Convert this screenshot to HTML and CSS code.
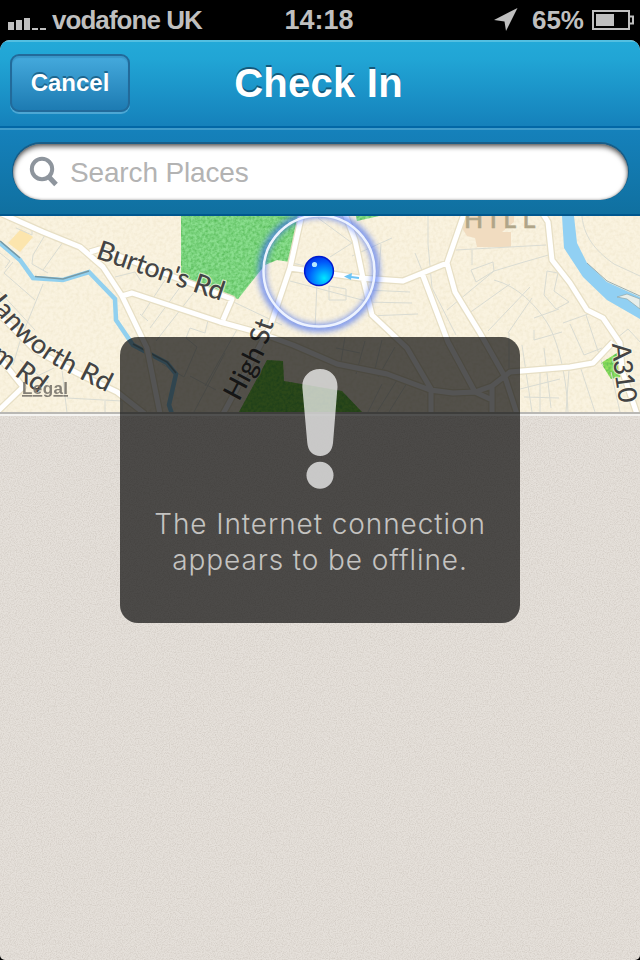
FILE: index.html
```html
<!DOCTYPE html>
<html lang="en">
<head>
<meta charset="utf-8">
<title>Check In</title>
<link rel="stylesheet" href="styles.css">
</head>
<body>
<div class="phone">
  <div class="status">
    <div class="carrier">
      <svg width="39" height="14" viewBox="0 0 39 14" fill="#bfbfbf"><path d="M0 6h6v8H0zM8 4h6v10H8zM16 2h6v12h-6zM24 12h6v2h-6zM32 12h6v2h-6z"/></svg>
      <span class="carrier-name">vodafone UK</span>
    </div>
    <div class="clock">14:18</div>
    <div class="power">
      <svg class="arrow" width="24" height="24" viewBox="0 0 24 24" fill="#bfbfbf"><path d="M23.500 0L0 12L10.500 13.500L12 23z"/></svg>
      <span class="percent">65%</span>
      <svg width="42" height="20" viewBox="0 0 42 20"><path d="M1 1h36v18H1zM38 6.500h3v7h-3" fill="none" stroke="#bfbfbf" stroke-width="2"/><path d="M4 4h18v12H4z" fill="#bfbfbf"/></svg>
    </div>
  </div>
  <div class="screen">
    <div class="navbar">
      <div class="cancel"><span>Cancel</span></div>
      <div class="title"><span>Check In</span></div>
      <div class="spacer"></div>
    </div>
    <div class="searchbar">
      <div class="field">
        <svg width="30" height="32" viewBox="0 0 30 32" fill="none" stroke="#8e959d"><circle cx="13" cy="13" r="10.200" stroke-width="4"/><path d="M19.500 20.500L27 28.500" stroke-width="5"/></svg>
        <span>Search Places</span>
      </div>
    </div>
    <svg class="map" width="640" height="196" viewBox="0 216 640 196">
      <defs>
        <filter id="grain" x="0" y="0" width="100%" height="100%" color-interpolation-filters="sRGB"><feTurbulence type="fractalNoise" baseFrequency=".35" numOctaves="2" result="n"/><feColorMatrix in="n" type="matrix" values="0 0 0 0 .3  0 0 0 0 .7  0 0 0 0 .3  1.400 0 0 0 -.45"/><feComposite in2="SourceGraphic" operator="in"/><feMerge><feMergeNode in="SourceGraphic"/><feMergeNode/></feMerge></filter>
        <filter id="paper" x="0" y="0" width="100%" height="100%" color-interpolation-filters="sRGB"><feTurbulence type="fractalNoise" baseFrequency=".3" numOctaves="2"/><feColorMatrix type="matrix" values="0 0 0 0 .7  0 0 0 0 .62  0 0 0 0 .35  .4 0 0 0 -.15"/></filter>
        <filter id="glow" x="-30%" y="-30%" width="160%" height="160%"><feGaussianBlur stdDeviation="3"/></filter>
        <radialGradient id="ball" cx=".68" cy=".75" r=".75"><stop offset="0" stop-color="#00e8ff"/><stop offset=".4" stop-color="#0097ff"/><stop offset=".75" stop-color="#0057fa"/><stop offset="1" stop-color="#0038e8"/></radialGradient>
        <path id="burton" d="M95 258L224 302"/>
        <path id="hanworth" d="M-19 294L3 321C20 342 40 359 72 375L122 400"/>
        <path id="lower" d="M-10 358L55 405"/>
        <path id="high" d="M239 402C248 385 256 370 262 358S268 338 277 315"/>
        <path id="a310" d="M612 344C613 362 616 385 621 412"/>
      </defs>
      <path d="M0 216h640v196H0z" fill="#faf3e0"/>
      <path d="M0 216h640v196H0z" filter="url(#paper)" opacity=".5"/>
      <path d="M21 229l12 8-13 15-12-9z" fill="#fce5ad"/>
      <path d="M465 216h49v6l-12 10 9 0v15h-34l-2-9-8-2-5-8z" fill="#f1dcc0"/>
      <g filter="url(#grain)">
        <path d="M181 216h120l-11 46-13-2-12 5-12 15-15 19-57-21z" fill="#8ade8e"/>
        <path d="M356 216h23l-22 5z" fill="#8ade8e"/>
        <path d="M267 360l16 1 1 20 58 10 20 21H239z" fill="#84da4e"/>
        <path d="M601 363l16-10 8 7v16l-14 3z" fill="#93e05d"/>
      </g>
      <g fill="none" stroke="#dadcd3" stroke-width="1">
        <path d="M16 228l16 7v-6l-10-3M45 235l-12 20-1 9 16 9M63 242l-20 28M0 253l10 8-5 7M13 262l-9 11 31 27M43 284l-22 54-8 27M0 292l35 38M20 360l28 23M29 380l25-12M60 353l7 60M67 398l55 3v12M105 401v12"/>
        <path d="M115 277l20-5 6 9M165 280l-23 35M181 286l-31 42M195 291l-39 50M140 314l8 7M209 316l-4 17-15-5-4 10 11 9-13 30-22-13M239 326l-34 60M225 353l-31 59M190 376l26 14M221 296l61 29M318 218l34 25-22 14M292 263l67 15M290 281l76 20M317 283l-2 46M329 286l17 3v11h-17zM381 244l-3 40M352 256l40-18M366 290l44 2M364 302l48 1M368 316l50-2M415 253l14 35M336 348l24 5M345 337l-5 31M365 341l-9 33M382 340l-8 33M395 347l-17 30M382 384l-14 28M397 380l-20 32M407 383l-18 29"/>
        <path d="M428 216v28l4 44 24 47M456 250l90-5M472 250v15M471 270l22-8 1 9-18 11zM447 310l47-39 30-9M465 316l45-32M488 331l42-44M494 280c24 6 42 26 52 41s20 48 22 91M524 262l28-8M547 271l11 2-4 18 15 11-13 7-12-14zM534 318l25-9M534 330v10l28-8M563 323l28-10M570 324l14 31 18-7M586 315l17 51M509 333v38M508 333l24-35M522 345l10 67M544 348l7 60M569 370l-3 42M581 369l14 43M611 372l9 40M540 373v39M520 389l40-10M524 397l35 1"/>
        <path d="M582 216c2 24 18 38 32 48l26 12M612 342l16-13 14 15"/>
      </g>
      <path d="M0 243L20 260L33 278L63 280L89 272L115 299L116 320L133 345L167 363L176 374L169 405L172 414" fill="none" stroke="#91d0ef" stroke-width="4.500"/>
      <path d="M0 241L20 258M35 276.500L63 279L89 271M133 344L167 362L176 373" fill="none" stroke="#7799a5" stroke-width="1.500"/>
      <path d="M562 216l2 32 19 29 24 23 33 19v-22l-33-15-20-19-10-20-3-27z" fill="#91d0f3"/>
      <path d="M587 263l20 18 33 15" fill="none" stroke="#819eaa" stroke-width=".8"/>
      <path d="M617 297l10 2 13 10v-10l-13-5z" fill="#e8eee9" stroke="#91a6a7" stroke-width=".7"/>
      <g fill="none" stroke-linejoin="round">
        <g stroke="#e7dfc5" stroke-width="7.500"><path d="M0 213L43 232L80 247L103 267L122 296L147 348L160 414M122 296L132 293L220 322L260 333L293 345L337 364L387 374L430 390L453 393L475 392L492 386L510 372L570 367L593 363L613 342M302 214L290 268L270 327L223 414M290 268L360 278L403 281L430 270L447 263L464 214M345 214L355 240L363 278L372 315L407 348L431 389V414M422 273L448 342L475 392L492 400M447 263L455 292L480 333L505 377L517 414M543 214L548 222L552 260L570 283L587 310L603 318L620 343L622 370L637 414M492 386V414M-5 310L35 350L77 373L117 392L145 414M-5 352L23 387L-3 412M90 252L100 249L187 282L232 299L223 320"/></g>
        <g stroke="#fff" stroke-width="5"><path d="M0 213L43 232L80 247L103 267L122 296L147 348L160 414M122 296L132 293L220 322L260 333L293 345L337 364L387 374L430 390L453 393L475 392L492 386L510 372L570 367L593 363L613 342M302 214L290 268L270 327L223 414M290 268L360 278L403 281L430 270L447 263L464 214M345 214L355 240L363 278L372 315L407 348L431 389V414M422 273L448 342L475 392L492 400M447 263L455 292L480 333L505 377L517 414M543 214L548 222L552 260L570 283L587 310L603 318L620 343L622 370L637 414M492 386V414M-5 310L35 350L77 373L117 392L145 414M-5 352L23 387L-3 412M90 252L100 249L187 282L232 299L223 320"/></g>
      </g>
      <g class="road-label">
        <text><textPath href="#burton" textLength="133">Burton's Rd</textPath></text>
        <text><textPath href="#hanworth" textLength="162">Hanworth Rd</textPath></text>
        <text><textPath href="#lower">m Rd</textPath></text>
        <text><textPath href="#high">High St</textPath></text>
        <text class="route"><textPath href="#a310">A310</textPath></text>
      </g>
      <text class="district" x="464" y="228">HILL</text>
      <text class="legal" x="22" y="394" textLength="46">Legal</text>
      <circle cx="319" cy="271" r="57" fill="none" stroke="#3d69f4" stroke-width="6" opacity=".85" filter="url(#glow)"/>
      <circle cx="319" cy="271" r="55.500" fill="none" stroke="#edf3ff" stroke-width="2.500"/>
      <path d="M359 278l-8-1" fill="none" stroke="#6dc4f5" stroke-width="2"/><path d="M344 276.500l8-3.500-1 7z" fill="#6dc4f5"/>
      <circle cx="319" cy="271" r="14.400" fill="url(#ball)" stroke="#001bd0" stroke-width="1.500"/>
      <circle cx="314.500" cy="264.500" r="2.600" fill="#b5e8ff"/>
    </svg>
    <div class="content">
      <svg class="texture" width="640" height="544"><filter id="fine" x="0" y="0" width="100%" height="100%" color-interpolation-filters="sRGB"><feTurbulence type="fractalNoise" baseFrequency=".85" numOctaves="2"/><feColorMatrix type="matrix" values="0 0 0 0 .55  0 0 0 0 .5  0 0 0 0 .45  .4 0 0 0 -.15"/></filter><rect width="640" height="544" filter="url(#fine)"/></svg>
    </div>
  </div>
  <div class="hud">
    <svg width="36" height="120" viewBox="0 0 36 120" fill="#fff"><path d="M.3 18C0 7 8 0 18 0s17.800 7 17.500 18L31 74c-.8 8-5.500 13-12.800 13S6 82 5.300 74z"/><circle cx="18" cy="106.200" r="13.500"/></svg>
    <p><span class="line first">The Internet connection</span><span class="line second">appears to be offline.</span></p>
  </div>
</div>
</body>
</html>
```
FILE: styles.css
```css
body { margin: 0; background: #000; font-family: "Liberation Sans", Arial, sans-serif; }
.phone { position: relative; width: 640px; height: 960px; overflow: hidden; background: #000; }
.status { height: 40px; display: grid; grid-template-columns: 1fr auto 1fr; align-items: center; color: #bfbfbf; font-size: 26px; font-weight: bold; line-height: 40px; }
.carrier { display: flex; align-items: center; gap: 5px; padding-left: 8px; }
.carrier svg { margin-top: 6px; }
.carrier-name { letter-spacing: -.95px; }
.clock { font-size: 27px; margin-right: 2px; }
.power { display: flex; align-items: center; justify-content: flex-end; padding-right: 6px; gap: 8px; }
.arrow { margin-right: 6px; }
.screen { height: 920px; display: flex; flex-direction: column; border-radius: 10px 10px 5px 5px; overflow: hidden; background: #e5e0da; }
.navbar { height: 72px; display: grid; grid-template-columns: 120px 1fr 120px; padding: 12px 10px 0; border-top: 2px solid #53bfe1; border-bottom: 2px solid #0267a6; background: linear-gradient(#23a9d8, #21a5d5 20%, #1581bb); }
.cancel { height: 54px; width: 116px; border: 2px solid #226a9a; border-radius: 9px; background: linear-gradient(#45aadd, #1d7bb2); box-shadow: 0 2px 0 rgba(130,198,231,.5), inset 0 2px 1px rgba(25,95,145,.25); color: #fff; font-size: 24px; font-weight: bold; line-height: 54px; text-align: center; text-shadow: 0 -2px 0 #1d668f; }
.title { text-align: center; color: #fff; font-size: 40px; font-weight: bold; letter-spacing: .25px; line-height: 58px; margin-left: -3px; text-shadow: 0 -2px 0 #14597b; }
.searchbar { height: 70px; padding: 14px 12px 0 13px; border-top: 2px solid #409bca; border-bottom: 2px solid #00578e; background: linear-gradient(#1581bb, #1070a0); }
.field { height: 56px; padding-left: 16px; display: flex; align-items: center; gap: 11px; border-radius: 30px; background: #fff; box-shadow: inset 0 3px 5px rgba(0,0,0,.55), inset 0 0 3px rgba(0,0,0,.35), 0 -1px 0 1px rgba(26,76,110,.65); color: #b3b3b3; font-size: 28px; }
.field svg { margin-top: -1px; }
.field span { padding-top: 2px; letter-spacing: -.15px; }
.map { display: block; flex: none; }
.road-label { font: 500 27px "Lato", sans-serif; fill: #444; stroke: #fffbe9; stroke-width: 2px; stroke-opacity: .7; paint-order: stroke; }
.route { font-size: 26px; letter-spacing: -.8px; }
.district { font: 500 25px "Lato", sans-serif; letter-spacing: 6.5px; fill: #b0a588; stroke: #b0a588; stroke-width: .5px; }
.legal { font: bold 17px "Liberation Sans", sans-serif; fill: #706c65; text-decoration: underline; opacity: .85; }
.content { flex: 1; border-top: 2px solid #b9b8b4; box-shadow: inset 0 2px 0 #f5f4f1; overflow: hidden; }
.texture { display: block; margin-top: 2px; }
.hud { position: absolute; left: 120px; top: 337px; width: 400px; height: 286px; border-radius: 18px; background: rgba(0,0,0,.67); display: flex; flex-direction: column; align-items: center; }
.hud svg { margin-top: 32px; opacity: .7; }
.hud p { margin: 17px 0 0; color: #c4c3c1; font: 350 28px/36px "Inter", sans-serif; text-align: center; }
.line { display: block; white-space: nowrap; }
.first { letter-spacing: .9px; }
.second { letter-spacing: .9px; }
```
